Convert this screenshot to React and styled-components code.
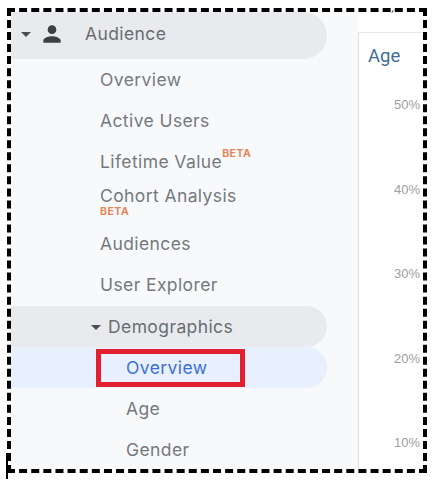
import React from 'react'
import styled, { createGlobalStyle } from 'styled-components'

const GlobalStyle = createGlobalStyle`
	html, body {
		margin: 0;
		padding: 0;
		background: #fff;
	}
	body {
		font-family: Inter, Roboto, sans-serif;
	}
`

const Page = styled.div`
	padding: 8px 0 0 7px;
	width: 435px;
	height: 481px;
	box-sizing: border-box;
	overflow: hidden;
`

const Frame = styled.div`
	position: relative;
	display: flex;
	width: 420px;
	height: 465px;
	box-sizing: border-box;
	border: 4px dashed #000;
`

const FrameClip = styled.div`
	display: flex;
	flex: 1;
	min-width: 0;
	overflow: hidden;
`

const Sidebar = styled.nav`
	width: 347px;
	flex-shrink: 0;
	padding-right: 31px;
	box-sizing: border-box;
	background: #f8f9fa;
	font-size: 17.5px;
	letter-spacing: 0.4px;
`

const SectionHead = styled.div`
	display: flex;
	align-items: center;
	height: 47px;
	padding: 0 0 4px 3px;
	box-sizing: border-box;
	background: #e8eaed;
	border-radius: 0 24px 24px 0;
	color: #696d72;
`

const SubHead = styled.div`
	display: flex;
	align-items: center;
	height: 41px;
	margin-top: 1px;
	padding-left: 73px;
	background: #e8eaed;
	border-radius: 0 21px 21px 0;
	color: #696d72;
`

const Item = styled.div`
	display: flex;
	align-items: center;
	height: 41px;
	padding-left: ${p => (p.$nested ? 115 : 89)}px;
	color: #75797e;
	white-space: nowrap;
`

const StackedItem = styled(Item)`
	flex-direction: column;
	align-items: flex-start;
	justify-content: flex-start;
	padding-top: 3px;
	box-sizing: border-box;
	line-height: 21px;
`

const ActiveItem = styled(Item)`
	position: relative;
	background: #e8f0fe;
	border-radius: 0 21px 21px 0;
	color: #3b6fd4;
`

const Highlight = styled.span`
	position: absolute;
	left: 85px;
	top: 2px;
	width: 149px;
	height: 38px;
	box-sizing: border-box;
	border: 5px solid #e2202f;
`

const Beta = styled.span`
	color: #e58559;
	font-size: 10.5px;
	font-weight: 700;
	letter-spacing: 0.5px;
	line-height: 11px;
`

const RaisedBeta = styled(Beta)`
	align-self: flex-start;
	margin-top: 7px;
`

const Caret = styled.svg`
	width: 24px;
	height: 24px;
	flex-shrink: 0;
	fill: #4a4d51;
`

const Person = styled.svg`
	width: 26px;
	height: 26px;
	flex-shrink: 0;
	margin: 0 20px 0 1px;
	fill: #3c4043;
`

const ChartPanel = styled.section`
	flex: 1;
	margin-top: 20px;
	padding: 12px 4px 0 9px;
	background: #fff;
	border-top: 1px solid #e6e6e6;
	border-left: 1px solid #e0e0e0;
`

const ChartTitle = styled.h2`
	margin: 0;
	height: 23px;
	color: #3f6d93;
	font-family: Roboto, sans-serif;
	font-size: 18.5px;
	font-weight: 400;
	line-height: 23px;
`

const AxisLabels = styled.div`
	display: flex;
	flex-direction: column;
	padding-top: 29px;
`

const AxisLabel = styled.div`
	height: 84.5px;
	margin-right: -1px;
	color: #a0a0a0;
	font-family: 'Liberation Sans', Arial, sans-serif;
	font-size: 13px;
	line-height: 16px;
	text-align: right;
`

const TopTick = styled.span`
	position: absolute;
	top: -2px;
	left: 381px;
	width: 1px;
	height: 3px;
	background: #555;
	transform: rotate(30deg);
`

const CornerTick = styled.span`
	position: absolute;
	left: -5px;
	bottom: -10px;
	width: 2px;
	height: 26px;
	background: #000;
`

const CaretIcon = () => (
	<Caret viewBox='0 0 24 24'>
		<path d='M7 10l5 5 5-5z' />
	</Caret>
)

const PersonIcon = () => (
	<Person viewBox='0 0 24 24'>
		<path d='M12 12c2.21 0 4-1.79 4-4s-1.79-4-4-4-4 1.79-4 4 1.79 4 4 4zm0 2c-2.67 0-8 1.34-8 4v2h16v-2c0-2.66-5.33-4-8-4z' />
	</Person>
)

const ticks = ['50%', '40%', '30%', '20%', '10%']

export default function App() {
	return (
		<Page>
			<GlobalStyle />
			<Frame>
				<FrameClip>
					<Sidebar>
						<SectionHead>
							<CaretIcon />
							<PersonIcon />
							Audience
						</SectionHead>
						<Item>Overview</Item>
						<Item>Active Users</Item>
						<Item>
							Lifetime Value
							<RaisedBeta>BETA</RaisedBeta>
						</Item>
						<StackedItem>
							Cohort Analysis
							<Beta>BETA</Beta>
						</StackedItem>
						<Item>Audiences</Item>
						<Item>User Explorer</Item>
						<SubHead>
							<CaretIcon />
							Demographics
						</SubHead>
						<ActiveItem $nested>
							Overview
							<Highlight />
						</ActiveItem>
						<Item $nested>Age</Item>
						<Item $nested>Gender</Item>
					</Sidebar>
					<ChartPanel>
						<ChartTitle>Age</ChartTitle>
						<AxisLabels>
							{ticks.map(t => (
								<AxisLabel key={t}>{t}</AxisLabel>
							))}
						</AxisLabels>
					</ChartPanel>
				</FrameClip>
				<TopTick />
				<CornerTick />
			</Frame>
		</Page>
	)
}
